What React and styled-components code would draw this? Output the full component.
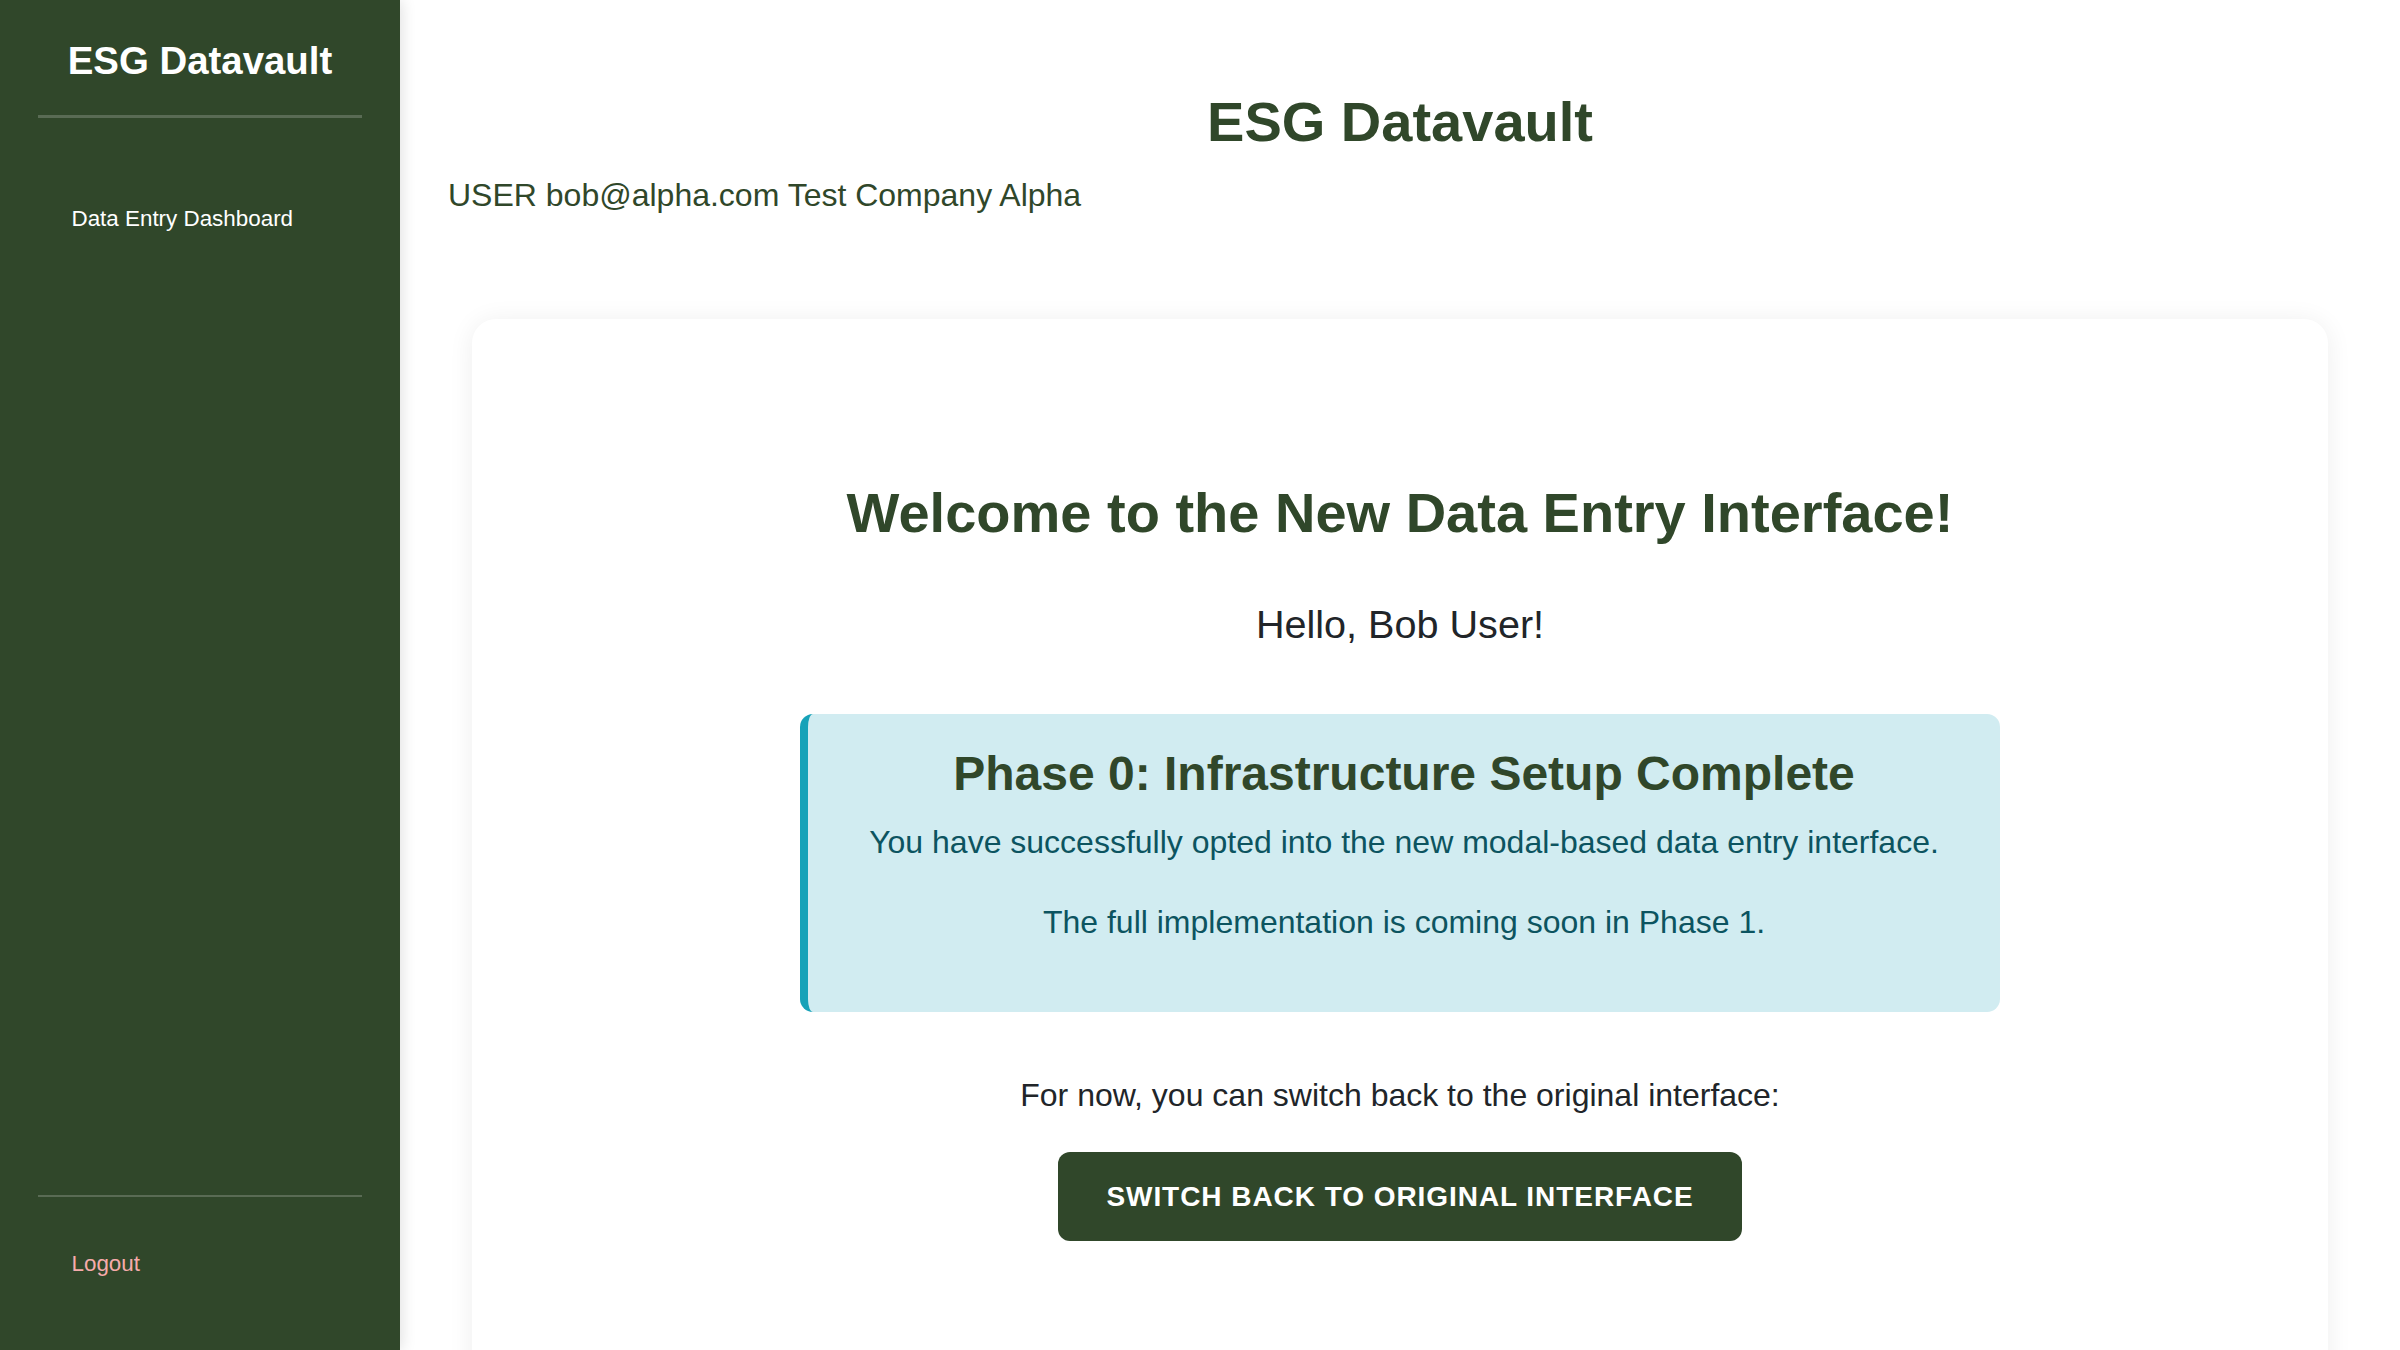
import React from "react";
import styled, { createGlobalStyle } from "styled-components";

const GREEN = "#30472a";

const Global = createGlobalStyle`
  html, body {
    margin: 0;
    padding: 0;
    height: 100%;
    overflow: hidden;
    background: #ffffff;
    font-family: "Liberation Sans", Arial, Helvetica, sans-serif;
  }
  * { box-sizing: border-box; }
`;

const Layout = styled.div`
  display: flex;
  height: 100vh;
  width: 100vw;
`;

const Sidebar = styled.aside`
  flex: 0 0 400px;
  width: 400px;
  height: 100%;
  background: ${GREEN};
  display: flex;
  flex-direction: column;
  padding: 39px 38px 54px;
  box-shadow: 2px 0 14px rgba(0, 0, 0, 0.12);
  position: relative;
  z-index: 1;
`;

const Brand = styled.div`
  color: #ffffff;
  font-weight: 700;
  font-size: 38.4px;
  line-height: 44px;
  text-align: center;
  padding-bottom: 32px;
  border-bottom: 3px solid rgba(255, 255, 255, 0.2);
`;

const Nav = styled.nav`
  display: flex;
  flex-direction: column;
  margin-top: 69px;
  flex: 1;
`;

const NavLink = styled.a`
  display: block;
  padding: 16px 33.5px;
  font-size: 22.4px;
  line-height: 32px;
  color: ${(p) => (p.$danger ? "#f6abab" : "#ffffff")};
  text-decoration: none;
  cursor: pointer;
`;

const SidebarFooter = styled.div`
  border-top: 2px solid rgba(255, 255, 255, 0.2);
  padding-top: 35px;
`;

const Main = styled.main`
  flex: 1;
  min-width: 0;
  height: 100%;
  overflow: hidden;
  padding: 90px 48px 0;
  display: flex;
  flex-direction: column;
`;

const PageTitle = styled.h1`
  margin: 0;
  text-align: center;
  color: ${GREEN};
  font-size: 56px;
  line-height: 64px;
  font-weight: 700;
`;

const UserLine = styled.div`
  margin-top: 20.5px;
  color: ${GREEN};
  font-size: 32px;
  line-height: 40px;
`;

const Card = styled.section`
  margin: 104.5px 24px 0;
  background: #ffffff;
  border-radius: 24px;
  box-shadow: 0 2px 26px rgba(0, 0, 0, 0.07);
  padding: 162px 48px 180px;
  display: flex;
  flex-direction: column;
  align-items: center;
  text-align: center;
`;

const Welcome = styled.h2`
  margin: 0;
  color: ${GREEN};
  font-size: 56px;
  line-height: 64px;
  font-weight: 700;
`;

const Hello = styled.p`
  margin: 56px 0 0;
  color: #212529;
  font-size: 39.6px;
  line-height: 46px;
`;

const InfoBox = styled.div`
  margin-top: 67px;
  width: 100%;
  max-width: 1200px;
  background: #d1ecf1;
  border-left: 8px solid #17a2b8;
  border-radius: 13px;
  padding: 32px 32px 34px;
  color: #0c5460;
`;

const InfoTitle = styled.h3`
  margin: 0 0 16px;
  color: ${GREEN};
  font-size: 48px;
  line-height: 56px;
  font-weight: 700;
`;

const InfoText = styled.p`
  margin: 0 0 32px;
  font-size: 32px;
  line-height: 48px;
`;

const Note = styled.p`
  margin: 63px 0 0;
  color: #212529;
  font-size: 32px;
  line-height: 40px;
`;

const SwitchButton = styled.button`
  margin-top: 37px;
  background: ${GREEN};
  color: #ffffff;
  border: none;
  border-radius: 12px;
  padding: 28px 48px;
  font-family: inherit;
  font-size: 28px;
  line-height: 33px;
  font-weight: 700;
  letter-spacing: 0.95px;
  text-transform: uppercase;
  cursor: pointer;
`;

export default function App() {
  return (
    <>
      <Global />
      <Layout>
        <Sidebar>
          <Brand>ESG Datavault</Brand>
          <Nav>
            <NavLink>Data Entry Dashboard</NavLink>
          </Nav>
          <SidebarFooter>
            <NavLink $danger>Logout</NavLink>
          </SidebarFooter>
        </Sidebar>
        <Main>
          <PageTitle>ESG Datavault</PageTitle>
          <UserLine>USER bob@alpha.com Test Company Alpha</UserLine>
          <Card>
            <Welcome>Welcome to the New Data Entry Interface!</Welcome>
            <Hello>Hello, Bob User!</Hello>
            <InfoBox>
              <InfoTitle>Phase 0: Infrastructure Setup Complete</InfoTitle>
              <InfoText>
                You have successfully opted into the new modal-based data entry interface.
              </InfoText>
              <InfoText>The full implementation is coming soon in Phase 1.</InfoText>
            </InfoBox>
            <Note>For now, you can switch back to the original interface:</Note>
            <SwitchButton>Switch Back to Original Interface</SwitchButton>
          </Card>
        </Main>
      </Layout>
    </>
  );
}
